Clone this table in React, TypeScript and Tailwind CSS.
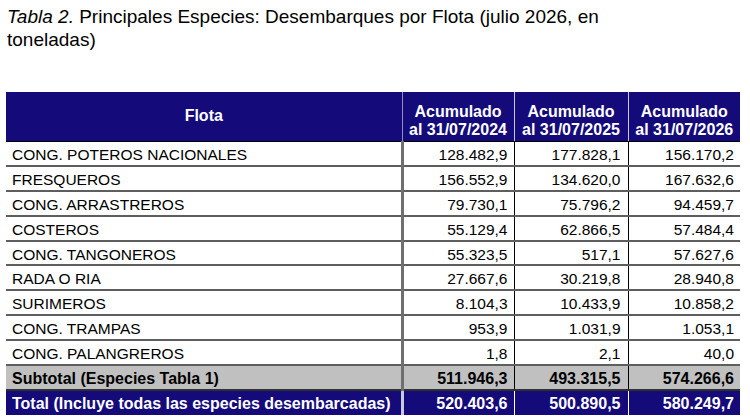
const rows: [string, string, string, string][] = [
  ["CONG. POTEROS NACIONALES", "128.482,9", "177.828,1", "156.170,2"],
  ["FRESQUEROS", "156.552,9", "134.620,0", "167.632,6"],
  ["CONG. ARRASTREROS", "79.730,1", "75.796,2", "94.459,7"],
  ["COSTEROS", "55.129,4", "62.866,5", "57.484,4"],
  ["CONG. TANGONEROS", "55.323,5", "517,1", "57.627,6"],
  ["RADA O RIA", "27.667,6", "30.219,8", "28.940,8"],
  ["SURIMEROS", "8.104,3", "10.433,9", "10.858,2"],
  ["CONG. TRAMPAS", "953,9", "1.031,9", "1.053,1"],
  ["CONG. PALANGREROS", "1,8", "2,1", "40,0"],
]

const years = ["2024", "2025", "2026"]

export default function App() {
  return (
    <div className="w-[750px] h-[420px] overflow-hidden bg-white text-black font-['Liberation_Sans',Arial,sans-serif]">
      <p className="pl-[7px] pt-[5px] pr-[150px] text-[19px] leading-[23px]">
        <i>Tabla 2.</i> Principales Especies: Desembarques por Flota (julio 2026, en toneladas)
      </p>

      <table className="ml-[6px] mt-[41px] border-collapse table-fixed w-[734px]">
        <colgroup>
          <col className="w-[396px]" />
          <col className="w-[112px]" />
          <col className="w-[114px]" />
          <col className="w-[112px]" />
        </colgroup>
        <thead>
          <tr className="h-[49px] bg-[#140a7a] text-white text-[16px] leading-[18px] font-bold">
            <th className="text-center align-middle border-r border-r-[#8f8bbf] border-b border-b-black">Flota</th>
            {years.map((y, i) => (
              <th
                key={y}
                className={
                  "text-center align-bottom pb-[2px] border-b border-b-black " +
                  (i < 2 ? "border-r border-r-[#c9c7e0]" : "")
                }
              >
                Acumulado
                <br />
                al 31/07/{y}
              </th>
            ))}
          </tr>
        </thead>
        <tbody className="text-[15.5px] leading-[18px]">
          {rows.map((r) => (
            <tr key={r[0]} className="h-[24.9px] border-b-2 border-b-[#5e5e5e]">
              <td className="pl-[6px] pt-[3px] border-r-[3px] border-r-[#6f6f6f]">{r[0]}</td>
              <td className="text-right pr-[6px] pt-[3px] border-r border-r-black">{r[1]}</td>
              <td className="text-right pr-[7px] pt-[3px] border-r border-r-black">{r[2]}</td>
              <td className="text-right pr-[6px] pt-[3px]">{r[3]}</td>
            </tr>
          ))}
          <tr className="h-[25px] bg-[#c0c0c0] font-bold text-[16px] border-b-2 border-b-[#303030]">
            <td className="pl-[6px] pt-[2px] border-r-[3px] border-r-[#6f6f6f]">Subtotal (Especies Tabla 1)</td>
            <td className="text-right pr-[6px] pt-[2px] border-r border-r-black">511.946,3</td>
            <td className="text-right pr-[7px] pt-[2px] border-r border-r-black">493.315,5</td>
            <td className="text-right pr-[6px] pt-[2px]">574.266,6</td>
          </tr>
          <tr className="h-[25px] bg-[#140a7a] text-white font-bold text-[16px]">
            <td className="pl-[6px] pt-[2px] border-r-[3px] border-r-[#c9c7e0]">Total (Incluye todas las especies desembarcadas)</td>
            <td className="text-right pr-[6px] pt-[2px] border-r border-r-white">520.403,6</td>
            <td className="text-right pr-[7px] pt-[2px] border-r border-r-white">500.890,5</td>
            <td className="text-right pr-[6px] pt-[2px]">580.249,7</td>
          </tr>
        </tbody>
      </table>
    </div>
  )
}
